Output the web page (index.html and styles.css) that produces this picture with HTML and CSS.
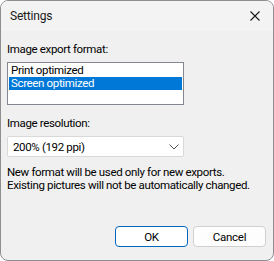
FILE: index.html
```html
<!DOCTYPE html>
<html lang="en">
<head>
  <meta charset="UTF-8" />
  <title>Settings</title>
  <link rel="stylesheet" href="styles.css">
</head>
<body>
  <div class="window">
    <div class="titlebar">
      <span class="title">Settings</span>
      <span class="close">
        <svg width="12" height="12" viewBox="0 0 12 12">
          <path d="M1.5 1.5 L10.5 10.5 M10.5 1.5 L1.5 10.5" stroke="#1a1a1a" stroke-width="1.1" fill="none"/>
        </svg>
      </span>
    </div>

    <div class="content">
      <div class="label">Image export format:</div>
      <div class="listbox">
        <div class="item">Print optimized</div>
        <div class="item selected">Screen optimized</div>
      </div>

      <div class="label">Image resolution:</div>
      <div class="combo">
        <span>200% (192 ppi)</span>
        <svg width="10" height="6" viewBox="0 0 10 6">
          <path d="M0.5 0.5 L5 5 L9.5 0.5" stroke="#555" stroke-width="1" fill="none"/>
        </svg>
      </div>

      <p class="note">New format will be used only for new exports.<br>Existing pictures will not be automatically changed.</p>

      <div class="buttons">
        <button class="btn default">OK</button>
        <button class="btn">Cancel</button>
      </div>
    </div>
  </div>
</body>
</html>
```

FILE: styles.css
```css
* {
  box-sizing: border-box;
  font-family: Roboto, 'Liberation Sans', sans-serif;
}

body {
  margin: 0;
  background: #ffffff;
}

.window {
  width: 274px;
  height: 261px;
  border: 1px solid #8f8f8f;
  border-radius: 8px;
  background: #f0f0f0;
  overflow: hidden;
  display: flex;
  flex-direction: column;
  font-size: 11.5px;
  letter-spacing: -0.35px;
  color: #000;
}

.titlebar {
  height: 30px;
  flex-shrink: 0;
  background: #f3f3f3;
  display: flex;
  align-items: center;
  justify-content: space-between;
  padding: 0 4px 0 9px;
}

.title {
  font-size: 12px;
  letter-spacing: -0.2px;
  color: #1a1a1a;
}

.close {
  width: 28px;
  height: 28px;
  display: flex;
  align-items: center;
  justify-content: center;
}

.content {
  flex: 1;
  display: flex;
  flex-direction: column;
  padding: 0 7px 13px 6px;
}

.label {
  height: 16px;
  line-height: 16px;
  margin-top: 10px;
}

.listbox {
  width: 177px;
  height: 43px;
  margin-top: 5px;
  background: #fff;
  border: 1px solid #828790;
  padding: 1px;
}

.item {
  height: 13px;
  line-height: 13px;
  padding-left: 2px;
}

.item.selected {
  background: #0078d7;
  color: #fff;
}

.combo {
  width: 177px;
  height: 21px;
  margin-top: 5px;
  background: #fff;
  border: 1px solid #d9d9d9;
  border-radius: 2px;
  display: flex;
  align-items: center;
  justify-content: space-between;
  padding: 0 4px 0 5px;
}

.note {
  margin: 9px 0 0;
  line-height: 13px;
  white-space: nowrap;
}

.buttons {
  margin-top: auto;
  display: flex;
  justify-content: flex-end;
  gap: 5px;
}

.btn {
  width: 73px;
  height: 21px;
  font-size: 11.5px;
  letter-spacing: -0.25px;
  background: #fdfdfd;
  border: 1px solid #d0d0d0;
  border-radius: 4px;
  color: #000;
  padding: 0;
}

.btn.default {
  border-color: #0067c0;
  background: #fff;
}
```
